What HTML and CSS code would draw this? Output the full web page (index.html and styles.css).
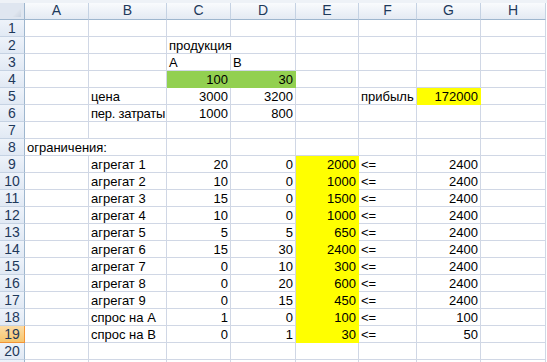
FILE: index.html
```html
<!DOCTYPE html>
<html lang="ru">
<head>
    <meta charset="UTF-8">
    <title>Лист1</title>
    <link rel="stylesheet" href="styles.css">
</head>
<body>

<div class="sheet">
    <div class="strip"></div>

    <!-- заголовки столбцов -->
    <div class="row head">
        <div class="corner"><span class="tri"></span></div>
        <div class="ch">A</div><div class="ch">B</div><div class="ch">C</div><div class="ch">D</div>
        <div class="ch">E</div><div class="ch">F</div><div class="ch">G</div><div class="ch">H</div>
    </div>

    <div class="row"><div class="rh">1</div><div class="c"></div><div class="c"></div><div class="c"></div><div class="c"></div><div class="c"></div><div class="c"></div><div class="c"></div><div class="c"></div></div>
    <div class="row"><div class="rh">2</div><div class="c"></div><div class="c"></div><div class="c span2">продукция</div><div class="c"></div><div class="c"></div><div class="c"></div><div class="c"></div></div>
    <div class="row"><div class="rh">3</div><div class="c"></div><div class="c"></div><div class="c">A</div><div class="c">B</div><div class="c"></div><div class="c"></div><div class="c"></div><div class="c"></div></div>
    <div class="row"><div class="rh">4</div><div class="c"></div><div class="c"></div><div class="c num green">100</div><div class="c num green">30</div><div class="c"></div><div class="c"></div><div class="c"></div><div class="c"></div></div>
    <div class="row"><div class="rh">5</div><div class="c"></div><div class="c">цена</div><div class="c num">3000</div><div class="c num">3200</div><div class="c"></div><div class="c">прибыль</div><div class="c num yellow">172000</div><div class="c"></div></div>
    <div class="row"><div class="rh">6</div><div class="c"></div><div class="c tight">пер. затраты</div><div class="c num">1000</div><div class="c num">800</div><div class="c"></div><div class="c"></div><div class="c"></div><div class="c"></div></div>
    <div class="row"><div class="rh">7</div><div class="c"></div><div class="c"></div><div class="c"></div><div class="c"></div><div class="c"></div><div class="c"></div><div class="c"></div><div class="c"></div></div>
    <div class="row"><div class="rh">8</div><div class="c span2">ограничения:</div><div class="c"></div><div class="c"></div><div class="c"></div><div class="c"></div><div class="c"></div><div class="c"></div></div>

    <!-- ограничения по агрегатам -->
    <div class="row"><div class="rh">9</div><div class="c"></div><div class="c">агрегат 1</div><div class="c num">20</div><div class="c num">0</div><div class="c num yellow">2000</div><div class="c">&lt;=</div><div class="c num">2400</div><div class="c"></div></div>
    <div class="row"><div class="rh">10</div><div class="c"></div><div class="c">агрегат 2</div><div class="c num">10</div><div class="c num">0</div><div class="c num yellow">1000</div><div class="c">&lt;=</div><div class="c num">2400</div><div class="c"></div></div>
    <div class="row"><div class="rh">11</div><div class="c"></div><div class="c">агрегат 3</div><div class="c num">15</div><div class="c num">0</div><div class="c num yellow">1500</div><div class="c">&lt;=</div><div class="c num">2400</div><div class="c"></div></div>
    <div class="row"><div class="rh">12</div><div class="c"></div><div class="c">агрегат 4</div><div class="c num">10</div><div class="c num">0</div><div class="c num yellow">1000</div><div class="c">&lt;=</div><div class="c num">2400</div><div class="c"></div></div>
    <div class="row"><div class="rh">13</div><div class="c"></div><div class="c">агрегат 5</div><div class="c num">5</div><div class="c num">5</div><div class="c num yellow">650</div><div class="c">&lt;=</div><div class="c num">2400</div><div class="c"></div></div>
    <div class="row"><div class="rh">14</div><div class="c"></div><div class="c">агрегат 6</div><div class="c num">15</div><div class="c num">30</div><div class="c num yellow">2400</div><div class="c">&lt;=</div><div class="c num">2400</div><div class="c"></div></div>
    <div class="row"><div class="rh">15</div><div class="c"></div><div class="c">агрегат 7</div><div class="c num">0</div><div class="c num">10</div><div class="c num yellow">300</div><div class="c">&lt;=</div><div class="c num">2400</div><div class="c"></div></div>
    <div class="row"><div class="rh">16</div><div class="c"></div><div class="c">агрегат 8</div><div class="c num">0</div><div class="c num">20</div><div class="c num yellow">600</div><div class="c">&lt;=</div><div class="c num">2400</div><div class="c"></div></div>
    <div class="row"><div class="rh">17</div><div class="c"></div><div class="c">агрегат 9</div><div class="c num">0</div><div class="c num">15</div><div class="c num yellow">450</div><div class="c">&lt;=</div><div class="c num">2400</div><div class="c"></div></div>
    <div class="row"><div class="rh">18</div><div class="c"></div><div class="c">спрос на A</div><div class="c num">1</div><div class="c num">0</div><div class="c num yellow">100</div><div class="c">&lt;=</div><div class="c num">100</div><div class="c"></div></div>
    <div class="row"><div class="rh active">19</div><div class="c"></div><div class="c">спрос на B</div><div class="c num">0</div><div class="c num">1</div><div class="c num yellow">30</div><div class="c">&lt;=</div><div class="c num">50</div><div class="c"></div></div>
    <div class="row"><div class="rh">20</div><div class="c"></div><div class="c"></div><div class="c"></div><div class="c"></div><div class="c"></div><div class="c"></div><div class="c"></div><div class="c"></div></div>
    <div class="row"><div class="rh"></div><div class="c"></div><div class="c"></div><div class="c"></div><div class="c"></div><div class="c"></div><div class="c"></div><div class="c"></div><div class="c"></div></div>
</div>

</body>
</html>
```

FILE: styles.css
```css
/* лист в стиле Excel 2007 */
body {
    margin: 0;
    background: #ffffff;
    font-family: "Liberation Sans", Arial, sans-serif;
    font-size: 13px;
    color: #000000;
    overflow: hidden;
}

.sheet {
    width: 547px;
}

.strip {
    height: 3px;
    background: #eef2f7;
}

/* строка: ширины столбцов как на листе */
.row {
    display: grid;
    grid-template-columns: 25px 64px 78px 64px 65px 63px 58px 64px 65px;
    height: 17px;
}

.c {
    box-sizing: border-box;
    height: 17px;
    border-right: 1px solid #d0d7e5;
    border-bottom: 1px solid #d0d7e5;
    padding: 2px 3px 0 2px;
    line-height: 14px;
    white-space: nowrap;
    overflow: hidden;
}

.num {
    text-align: right;
    padding-right: 2px;
}

.tight {
    letter-spacing: -0.25px;
    padding-right: 0;
}

.span2 {
    grid-column: span 2;
}

/* заливки */
.green {
    background: #92d050;
    border-color: #92d050;
}

.yellow {
    background: #ffff00;
    border-color: #ffff00;
}

/* заголовки */
.corner,
.ch,
.rh {
    box-sizing: border-box;
    height: 17px;
    color: #1e395b;
    text-align: center;
    line-height: 15px;
}

.corner {
    position: relative;
    background: #dfe6f0;
    border-right: 1px solid #9eb6ce;
    border-bottom: 1px solid #9eb6ce;
}

.tri {
    position: absolute;
    right: 3px;
    bottom: 2px;
    width: 9px;
    height: 9px;
    background: linear-gradient(135deg, #f4f6f9, #c9d3e1);
    clip-path: polygon(100% 0, 100% 100%, 0 100%);
}

.ch {
    background: linear-gradient(#f9fbfd, #e4eaf3);
    border-right: 1px solid #c5d2e3;
    border-bottom: 1px solid #9eb6ce;
    font-size: 14px;
}

.rh {
    background: linear-gradient(#eef3fa, #e1e9f4);
    border-right: 1px solid #9eb6ce;
    border-bottom: 1px solid #c5d2e3;
    font-size: 14px;
    padding-top: 1px;
}

.rh.active {
    background: linear-gradient(#fbdca6, #f7c66e);
    border-right-color: #f29436;
    border-bottom-color: #f29436;
}
```
